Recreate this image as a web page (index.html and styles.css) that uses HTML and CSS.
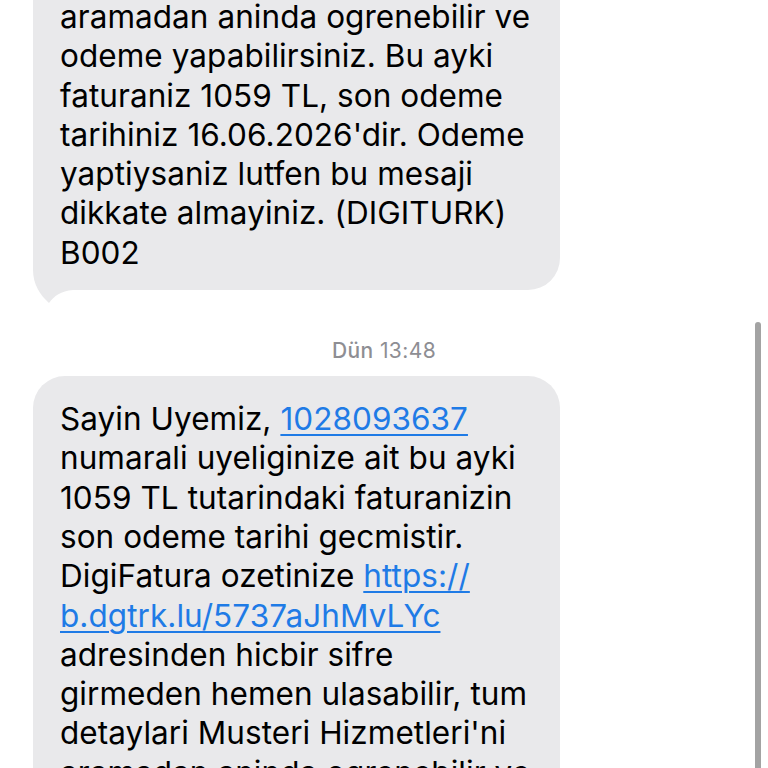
FILE: index.html
```html
<!DOCTYPE html>
<html lang="tr">
<head>
<meta charset="utf-8">
<title>Mesajlar</title>
<link rel="stylesheet" href="styles.css">
</head>
<body>
<main class="screen">
  <div class="thread">
    <div class="bubble bubble-cut">
      <svg class="tail" width="48" height="56" viewBox="0 0 48 56" aria-hidden="true"><path d="M0 0 L0 22 C0 36 7 47 16 55 C21 48 28 43 40 42 L48 42 L48 0 Z"/></svg>
      <p class="text">aramadan aninda ogrenebilir ve<br>odeme yapabilirsiniz. Bu ayki<br>faturaniz 1059 TL, son odeme<br>tarihiniz 16.06.2026'dir. Odeme<br>yaptiysaniz lutfen bu mesaji<br>dikkate almayiniz. (DIGITURK)<br>B002</p>
    </div>
    <div class="stamp"><span class="stamp-day">Dün</span> 13:48</div>
    <div class="bubble">
      <p class="text">Sayin Uyemiz, <a class="link" href="#">1028093637</a><br>numarali uyeliginize ait bu ayki<br>1059 TL tutarindaki faturanizin<br>son odeme tarihi gecmistir.<br>DigiFatura ozetinize <a class="link" href="#">https://<br>b.dgtrk.lu/5737aJhMvLYc</a><br>adresinden hicbir sifre<br>girmeden hemen ulasabilir, tum<br>detaylari Musteri Hizmetleri'ni<br>aramadan aninda ogrenebilir ve</p>
    </div>
  </div>
  <div class="scrollbar"></div>
</main>
</body>
</html>
```
FILE: styles.css
```css
html, body {
  margin: 0;
  padding: 0;
  background: #ffffff;
}
.screen {
  position: relative;
  width: 768px;
  height: 768px;
  overflow: hidden;
  font-family: Inter, "Noto Sans", "Liberation Sans", sans-serif;
}
.thread {
  display: flex;
  flex-direction: column;
  align-items: flex-start;
  margin-top: -3px;
  padding-left: 33px;
}
.bubble {
  position: relative;
  width: 527px;
  box-sizing: border-box;
  background: #e9e9eb;
  border-radius: 32px;
  padding: 23px 27px 20px 27px;
}
.bubble-cut {
  border-top-left-radius: 0;
  border-top-right-radius: 0;
  padding-top: 0;
  padding-bottom: 18px;
}
.text {
  position: relative;
  z-index: 1;
  margin: 0;
  font-size: 31.5px;
  line-height: 39.3px;
  color: #000000;
  white-space: nowrap;
  letter-spacing: 0.05px;
}
.link {
  color: #1f7be6;
  text-decoration: underline;
  text-decoration-thickness: 2px;
  text-underline-offset: 4px;
}
.tail {
  position: absolute;
  left: 0;
  bottom: -14px;
  fill: #e9e9eb;
}
.stamp {
  align-self: stretch;
  margin: 48px 33px 12px 0;
  text-align: center;
  font-size: 21px;
  line-height: 26px;
  letter-spacing: 0.4px;
  color: #8e8e93;
}
.stamp-day {
  font-weight: 500;
}
.scrollbar {
  position: absolute;
  left: 755px;
  top: 322px;
  width: 6px;
  height: 460px;
  border-radius: 3px;
  background: #a3a3a3;
}
```
